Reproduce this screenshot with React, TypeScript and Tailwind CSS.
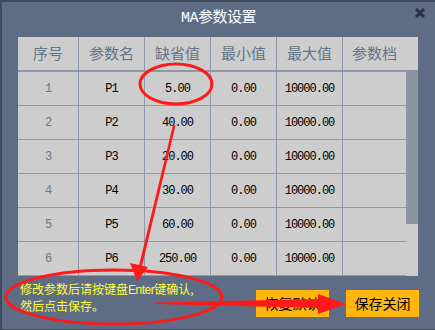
import React from "react";

const rows = [
  { id: 1, name: "P1", def: "5.00" },
  { id: 2, name: "P2", def: "40.00" },
  { id: 3, name: "P3", def: "20.00" },
  { id: 4, name: "P4", def: "30.00" },
  { id: 5, name: "P5", def: "60.00" },
  { id: 6, name: "P6", def: "250.00" },
];

const mono = {
  fontFamily: '"Liberation Mono", "DejaVu Sans Mono", "Noto Sans CJK SC", monospace',
};
const cjk = { fontFamily: '"Noto Sans CJK SC", sans-serif' };

function App() {
  return (
    <div className="relative w-[435px] h-[330px] bg-[#5e6d85] border-l-2 border-t-2 border-b border-[#3f4a5c] overflow-hidden">
      {/* title bar */}
      <div className="relative h-[35px] flex items-center justify-center">
        <span className="text-white text-[15px] tracking-[-0.5px]" style={mono}>
          MA参数设置
        </span>
        <svg
          className="absolute right-[9px] top-[5px]"
          width="12"
          height="12"
          viewBox="0 0 12 12"
        >
          <path d="M2 2 L10 10 M10 2 L2 10" stroke="#2a3242" strokeWidth="3" />
        </svg>
      </div>

      {/* table */}
      <div className="ml-[16px] w-[400px] h-[239px] bg-[#cdcdcd] flex flex-col overflow-hidden">
        <div className="flex h-[33px] text-[#64748a] text-[15px]" style={cjk}>
          <div className="w-[61px] border-r border-[#8d99aa] flex items-center justify-center">序号</div>
          <div className="w-[66px] border-r border-[#8d99aa] flex items-center justify-center">参数名</div>
          <div className="w-[66px] border-r border-[#8d99aa] flex items-center justify-center">缺省值</div>
          <div className="w-[66px] border-r border-[#8d99aa] flex items-center justify-center">最小值</div>
          <div className="w-[66px] border-r border-[#8d99aa] flex items-center justify-center">最大值</div>
          <div className="flex-1 flex items-center justify-center pr-[12px]">参数档</div>
        </div>
        <div className="flex flex-1">
          <div className="w-[388px] border-t-2 border-[#8d99aa]">
            {rows.map((r) => (
              <div
                key={r.id}
                className="flex h-[34px] border-b border-[#8d99aa] text-[12px] text-black tracking-[-1px]"
                style={mono}
              >
                <div className="w-[61px] border-r border-[#8d99aa] flex items-center justify-center text-[#66768d]">
                  {r.id}
                </div>
                <div className="w-[66px] border-r border-[#8d99aa] flex items-center justify-center">
                  {r.name}
                </div>
                <div className="w-[66px] border-r border-[#8d99aa] flex items-center justify-center">
                  {r.def}
                </div>
                <div className="w-[66px] border-r border-[#8d99aa] flex items-center justify-center">
                  0.00
                </div>
                <div className="w-[66px] border-r border-[#8d99aa] flex items-center justify-center">
                  10000.00
                </div>
                <div className="flex-1" />
              </div>
            ))}
          </div>
          <div className="w-[12px]">
            <div className="h-[154px] bg-[#8b95a4]" />
          </div>
        </div>
      </div>

      {/* footer */}
      <div className="flex items-start mt-[5px] pl-[18px] pr-[16px]">
        <div className="text-[#ffff33] text-[12px] leading-[16px] w-[230px]" style={cjk}>
          <div>
            修改参数后请按键盘
            <span className="tracking-[-0.5px]" style={{ fontFamily: '"Liberation Sans", sans-serif' }}>
              Enter
            </span>
            键确认,
          </div>
          <div>然后点击保存。</div>
        </div>
        <div className="flex gap-[17px] mt-[9px] ml-auto">
          <button className="w-[73px] h-[27px] bg-[#ffb70f] text-black text-[14px]" style={cjk}>
            恢复默认
          </button>
          <button className="w-[73px] h-[27px] bg-[#ffb70f] text-black text-[14px]" style={cjk}>
            保存关闭
          </button>
        </div>
      </div>

      {/* red annotations */}
      <svg
        className="absolute left-0 top-0 pointer-events-none"
        width="435"
        height="330"
        viewBox="0 0 435 330"
      >
        <ellipse cx="174" cy="82" rx="36" ry="20" fill="none" stroke="#ff1a1a" strokeWidth="3" />
        <ellipse cx="112" cy="295" rx="108" ry="27" fill="none" stroke="#ff1a1a" strokeWidth="3" />
        <polygon points="171,123 173.5,123.5 140,264 137,263.5" fill="#ff1a1a" />
        <polygon points="128,261 146,265 135,279" fill="#ff1a1a" />
        <polygon points="153,300.5 318,297 318,306 153,302" fill="#ff1a1a" />
        <polygon points="316,292 344,302 316,312" fill="#ff1a1a" />
      </svg>
    </div>
  );
}

export default App;
